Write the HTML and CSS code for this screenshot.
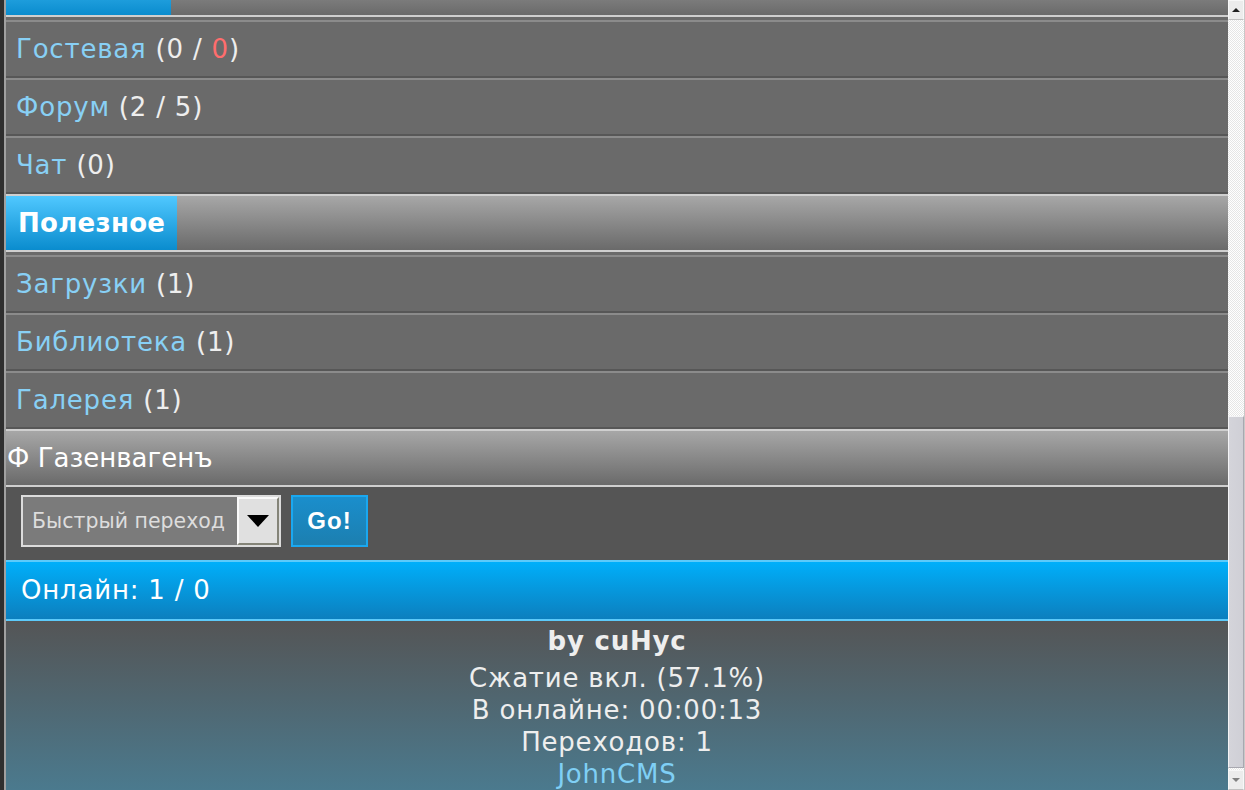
FILE: index.html
```html
<!DOCTYPE html>
<html lang="ru">
<head>
    <meta charset="UTF-8">
    <meta name="viewport" content="width=device-width, initial-scale=1.0">
    <title>Газенвагенъ</title>
    <link rel="stylesheet" href="styles.css">
</head>
<body>
    <div class="screen">
        <div class="page">
            <!-- Общение (cut off by scroll) -->
            <div class="phdr phdr-cut"><span class="tab">Общение</span></div>
            <div class="menu">
                <div class="list"><a href="#">Гостевая</a> (0 / <span class="red">0</span>)</div>
                <div class="list"><a href="#">Форум</a> (2 / 5)</div>
                <div class="list"><a href="#">Чат</a> (0)</div>
            </div>

            <!-- Полезное -->
            <div class="phdr"><span class="tab">Полезное</span></div>
            <div class="menu">
                <div class="list"><a href="#">Загрузки</a> (1)</div>
                <div class="list"><a href="#">Библиотека</a> (1)</div>
                <div class="list"><a href="#">Галерея</a> (1)</div>
            </div>

            <div class="phdr plain">Ф Газенвагенъ</div>

            <!-- Quick jump -->
            <form class="quick">
                <div class="fake-select">
                    <span class="fake-select-text">Быстрый переход</span>
                    <span class="fake-select-btn"><span class="arrow"></span></span>
                </div>
                <button type="button" class="go-btn">Go!</button>
            </form>

            <div class="online">Онлайн: 1 / 0</div>

            <div class="footer">
                <div class="footer-title">by cuHyc</div>
                <div>Сжатие вкл. (57.1%)</div>
                <div>В онлайне: 00:00:13</div>
                <div>Переходов: 1</div>
                <div><a href="#">JohnCMS</a></div>
            </div>
        </div>

        <!-- Scrollbar -->
        <div class="scrollbar">
            <div class="sb-btn"><span class="sb-up"></span></div>
            <div class="sb-track">
                <div class="sb-thumb"></div>
            </div>
            <div class="sb-btn"><span class="sb-down"></span></div>
        </div>
    </div>
</body>
</html>
```

FILE: styles.css
```css
/* General Styling */
body {
    margin: 0;
    padding: 0;
    background: #2f2f2f;
    font-family: "DejaVu Sans", Verdana, sans-serif;
    font-size: 26px;
    letter-spacing: 0.8px;
    color: #eeeeee;
    overflow: hidden;
}

a {
    color: #88d0f5;
    text-decoration: none;
}

.screen {
    display: flex;
    height: 790px;
}

.page {
    flex: 1;
    margin-left: 4px;
    border-left: 2px solid #a0a0a0;
    background: #6a6a6a;
    overflow: hidden;
}

/* Headers */
.phdr {
    display: flex;
    height: 54px;
    border-top: 2px solid #cfcfcf;
    border-bottom: 2px solid #cfcfcf;
    background: linear-gradient(#a7a7a7, #6a6a6a);
}

.phdr-cut {
    margin-top: -41px;
}

.phdr-cut .tab {
    padding-bottom: 4px;
    padding-right: 10px;
}

.tab {
    display: flex;
    align-items: center;
    padding: 0 12px;
    background: linear-gradient(#50c8ff, #0a8cce);
    color: #ffffff;
    font-weight: bold;
    letter-spacing: 0.3px;
}

.phdr.plain {
    align-items: center;
    padding-left: 1px;
    color: #ffffff;
    letter-spacing: 0;
}

/* Menu rows */
.menu {
    padding-top: 3px;
}

.list {
    height: 54px;
    line-height: 54px;
    padding-left: 10px;
    border-top: 2px solid #8b8b8b;
    border-bottom: 2px solid #575757;
    background: #6a6a6a;
}

.red {
    color: #ff6d6d;
}

/* Quick jump form */
.quick {
    display: flex;
    gap: 10px;
    margin: 0;
    padding: 8px 15px 13px;
    background: #555555;
}

.fake-select {
    display: flex;
    align-items: stretch;
    width: 256px;
    height: 48px;
    border: 2px solid #dcdcdc;
    background: #7b7b7b;
}

.fake-select-text {
    flex: 1;
    display: flex;
    align-items: center;
    padding-left: 9px;
    font-size: 20.5px;
    letter-spacing: 0;
    color: #dddddd;
    white-space: nowrap;
}

.fake-select-btn {
    display: flex;
    align-items: center;
    justify-content: center;
    width: 42px;
    background: #e0e0e0;
    border-top: 2px solid #fafafa;
    border-left: 2px solid #fafafa;
    border-right: 2px solid #848478;
    border-bottom: 2px solid #848478;
    box-sizing: border-box;
}

.arrow {
    width: 0;
    height: 0;
    border-left: 11px solid transparent;
    border-right: 11px solid transparent;
    border-top: 12px solid #000000;
}

.go-btn {
    width: 77px;
    height: 52px;
    padding: 0;
    border: 2px solid #1aa8f0;
    background: linear-gradient(#1a8ecc, #1c7fb0);
    color: #ffffff;
    font-family: "Liberation Sans", Arial, sans-serif;
    font-size: 24px;
    font-weight: bold;
    letter-spacing: 1px;
    cursor: pointer;
}

/* Online bar */
.online {
    height: 57px;
    line-height: 57px;
    padding-left: 15px;
    border-top: 2px solid #5ccafa;
    border-bottom: 2px solid #5ccafa;
    background: linear-gradient(#00affa, #0c7fbe);
    color: #ffffff;
}

/* Footer */
.footer {
    padding-top: 4px;
    height: 165px;
    line-height: 32px;
    text-align: center;
    background: linear-gradient(#545556, #4b7a8e);
    border-bottom: 2px solid #b0b8c0;
}

.footer-title {
    font-weight: bold;
    margin-bottom: 5px;
}

.footer a {
    color: #7fcff5;
}

/* Scrollbar */
.scrollbar {
    display: flex;
    flex-direction: column;
    width: 17px;
    background: repeating-conic-gradient(#ffffff 0 25%, #e6e6e6 0 50%) 0 0 / 2px 2px;
    border-right: 1px solid #c8c8c8;
    box-sizing: border-box;
}

.sb-btn {
    display: flex;
    align-items: center;
    justify-content: center;
    height: 18px;
    background: #ececec;
    border: 1px solid #f8f8f8;
    border-bottom-color: #c0c0c0;
}

.sb-up {
    width: 0;
    height: 0;
    border-left: 4px solid transparent;
    border-right: 4px solid transparent;
    border-bottom: 4px solid #202020;
}

.sb-down {
    width: 0;
    height: 0;
    border-left: 4px solid transparent;
    border-right: 4px solid transparent;
    border-top: 4px solid #808080;
}

.sb-track {
    flex: 1;
    display: flex;
    flex-direction: column;
    justify-content: flex-end;
}

.sb-thumb {
    height: 350px;
    margin-bottom: 2px;
    background: linear-gradient(90deg, #d4d4da, #cfcfd6);
    border: 1px solid #f4f4f6;
    border-right-color: #a8a8b0;
    border-bottom-color: #a8a8b0;
}
```
